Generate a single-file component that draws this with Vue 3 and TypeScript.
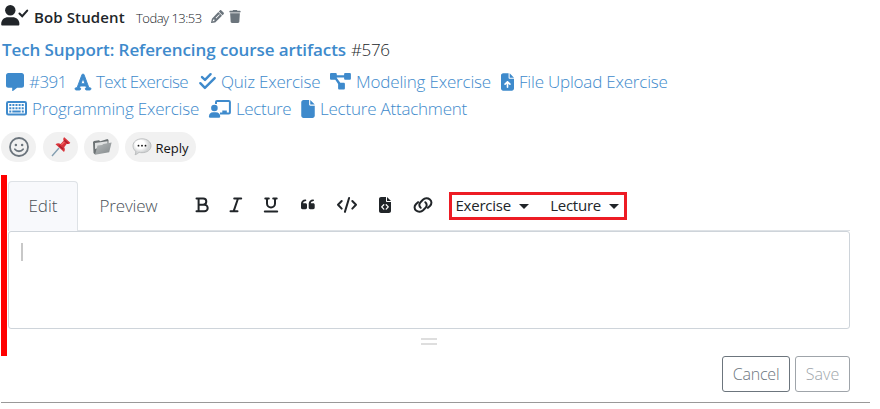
<script setup lang="ts">
import { ref } from 'vue'

interface Reference {
  icon: 'message' | 'font' | 'checks' | 'diagram' | 'upload' | 'keyboard' | 'teacher' | 'file'
  label: string
  iconWidth: number
  width: number
  spacing: number
}

const referenceRows: Reference[][] = [
  [
    { icon: 'message', label: '#391', iconWidth: 18, width: 69, spacing: -0.6 },
    { icon: 'font', label: 'Text Exercise', iconWidth: 16, width: 124, spacing: -0.6 },
    { icon: 'checks', label: 'Quiz Exercise', iconWidth: 17, width: 131, spacing: -0.22 },
    { icon: 'diagram', label: 'Modeling Exercise', iconWidth: 21, width: 171, spacing: -0.18 },
    { icon: 'upload', label: 'File Upload Exercise', iconWidth: 13, width: 170, spacing: -0.2 },
  ],
  [
    { icon: 'keyboard', label: 'Programming Exercise', iconWidth: 21, width: 203, spacing: -0.2 },
    { icon: 'teacher', label: 'Lecture', iconWidth: 22, width: 92, spacing: -0.35 },
    { icon: 'file', label: 'Lecture Attachment', iconWidth: 14, width: 170, spacing: -0.22 },
  ],
]

const activeTab = ref<'edit' | 'preview'>('edit')
</script>

<template>
  <main class="post">
    <header class="author">
      <svg class="user" viewBox="0 0 27 22" width="27" height="22">
        <circle cx="9.3" cy="5.2" r="5.2" />
        <path d="M7.2 12.3h4.2c4 0 7 2.700 7 6.700 0 1-.4 1.600-1.400 1.600H1.600C.6 20.600 .2 20 .2 19c0-4 3-6.700 7-6.700z" />
        <path class="stroke" d="M18.500 8.600l2.700 2.700 5-5.700" />
      </svg>
      <strong class="name">Bob Student</strong>
      <span class="date">Today 13:53</span>
      <svg class="pencil" viewBox="0 0 512 512" width="13" height="13"><path d="M410 18l84 84c22 22 22 42 0 62l-42 42L306 60l42-42c20-22 42-22 62 0zM287 79l146 146-258 258c-8 8-14 11-24 14L24 511c-14 4-27-9-23-23l31-127c3-10 7-16 14-24L287 79zM87 378l-24 74 74-24v-50H87zM182 310l22 22 142-142-22-22z" fill-rule="evenodd" /></svg>
      <svg class="trash" viewBox="0 0 448 512" width="12" height="13"><path d="M135 18L128 32H32C14 32 0 46 0 64s14 32 32 32h384c18 0 32-14 32-32s-14-32-32-32h-96l-7-14C307 7 296 0 284 0H164c-12 0-23 7-29 18zM416 128H32l21 339c2 25 23 45 48 45h246c25 0 46-20 48-45z" /></svg>
    </header>

    <h1 class="title"><a>Tech Support: Referencing course artifacts</a><span>#576</span></h1>

    <section class="references">
      <div v-for="(row, index) in referenceRows" :key="index" class="reference-row">
        <a v-for="item in row" :key="item.label" class="reference" :style="{ width: item.width + 'px' }">
          <svg v-if="item.icon === 'message'" viewBox="0 0 18 18" :width="item.iconWidth" height="18"><path d="M2.300 0h13.400C17 0 18 1 18 2.300v10.200c0 1.300-1 2.300-2.300 2.300h-4.600L7 17.900c-.4.300-.8.100-.8-.4v-2.700H2.300C1 14.800 0 13.800 0 12.500V2.300C0 1 1 0 2.300 0z" /></svg>
          <svg v-else-if="item.icon === 'font'" class="font-icon" viewBox="0 0 448 448" :width="item.iconWidth" height="16"><path d="M254 21c-5-13-17-21-30-21s-25 8-30 21L58 384H32c-18 0-32 14-32 32s14 32 32 32h96c18 0 32-14 32-32s-14-32-32-32h-2l18-48h160l18 48h-2c-18 0-32 14-32 32s14 32 32 32h96c18 0 32-14 32-32s-14-32-32-32h-26zM280 272H168l56-149z" /></svg>
          <svg v-else-if="item.icon === 'checks'" class="line-icon" viewBox="0 0 17 17" :width="item.iconWidth" height="17"><path d="M3 4.100l3 2.800 5.600-5.700M1.300 10.200l4.600 4.700 9.800-9.800" /></svg>
          <svg v-else-if="item.icon === 'diagram'" viewBox="0 0 21 17" :width="item.iconWidth" height="17"><path d="M1.300 0h4.200c.8 0 1.300.5 1.300 1.300v1h7.300v-1C14.100.5 14.600 0 15.400 0h4.200c.8 0 1.300.5 1.300 1.300v4.100c0 .8-.5 1.300-1.300 1.300h-4.200c-.8 0-1.300-.5-1.300-1.300v-1H6.800v.7l3.500 4.700h3.300c.8 0 1.300.5 1.300 1.300v4.200c0 .8-.5 1.300-1.300 1.300H9.400c-.8 0-1.300-.5-1.300-1.300v-4.200L5.300 6.700h-4C.5 6.700 0 6.200 0 5.400V1.300C0 .5.500 0 1.300 0z" /></svg>
          <svg v-else-if="item.icon === 'upload'" viewBox="0 0 384 512" :width="item.iconWidth" height="18"><path d="M64 0C29 0 0 29 0 64v384c0 35 29 64 64 64h256c35 0 64-29 64-64V160H256c-18 0-32-14-32-32V0zM256 0v128h128zM216 408c0 13-11 24-24 24s-24-11-24-24V306l-31 31c-9 9-25 9-34 0s-9-25 0-34l72-72c9-9 25-9 34 0l72 72c9 9 9 25 0 34s-25 9-34 0l-31-31z" /></svg>
          <svg v-else-if="item.icon === 'keyboard'" viewBox="0 0 21 15" :width="item.iconWidth" height="15">
            <rect class="key-frame" x="1" y="1" width="19" height="12.600" rx="1.300" />
            <path class="keys" d="M3.300 4h14.500M3.300 7.300h14.500" />
            <path d="M3.300 9.600h2v2h-2zM6.300 9.600h8.400v2H6.300zM15.800 9.600h2v2h-2z" />
          </svg>
          <svg v-else-if="item.icon === 'teacher'" viewBox="0 0 22 18" :width="item.iconWidth" height="18">
            <circle cx="5.400" cy="8" r="3.300" />
            <path d="M4.100 12.200h2.800c2.600 0 4.300 1.900 4.300 4.300 0 .8-.3 1.200-1.100 1.200H1c-.8 0-1.100-.4-1.100-1.200 0-2.400 1.700-4.300 4.200-4.300z" />
            <path class="board" d="M7 4V2.100c0-.7.400-1.100 1.100-1.100h11.700c.7 0 1.100.4 1.100 1.100v10.300c0 .7-.4 1.100-1.100 1.100H11" />
            <path d="M13.300 10.500h4.500v2.700h-4.500z" />
          </svg>
          <svg v-else viewBox="0 0 384 512" :width="item.iconWidth" height="18"><path d="M0 64C0 29 29 0 64 0h160v128c0 18 14 32 32 32h128v288c0 35-29 64-64 64H64c-35 0-64-29-64-64zm384 64H256V0z" /></svg>
          <span :style="{ letterSpacing: item.spacing + 'px' }">{{ item.label }}</span>
        </a>
      </div>
    </section>

    <section class="reactions">
      <button class="chip emoji">
        <svg viewBox="0 0 20 20" width="20" height="20"><g class="smile"><circle cx="10" cy="10" r="9" /><path d="M5.900 12.300c2 2.600 6.200 2.600 8.200 0" /></g><circle cx="6.900" cy="8" r="1.250" /><circle cx="13.100" cy="8" r="1.250" /></svg>
      </button>
      <button class="chip">
        <svg viewBox="0 0 20 20" width="20" height="20">
          <path d="M1 19L8 11" stroke="#829daf" stroke-width="1.300" />
          <path d="M4.500 7.200c2-1.200 3.700-1 5.100-.2l3-3.200c-.7-1.600-.3-2.900.7-3.500l6 5.500c-.7 1.200-2.200 1.500-3.500 1l-2.600 3.400c.9 1.600.9 3.300-.2 4.700z" fill="#d9343b" />
          <path d="M8 8.600l4 3.400M13.300 3.300l3.700 3.200" stroke="#a91e2b" stroke-width="1.300" />
          <path d="M10.400 7.900l3-3" stroke="#f36a68" stroke-width="1.200" />
        </svg>
      </button>
      <button class="chip">
        <svg viewBox="0 0 20 18" width="20" height="18">
          <defs><linearGradient id="folder-front" x2="1" y2="1"><stop stop-color="#b6babb" /><stop offset="1" stop-color="#83898b" /></linearGradient></defs>
          <path d="M1 4l1-1 5-.7 1.300 1L15.500 1l1 1v4L3 16.500 1.500 15z" fill="#6c7274" />
          <path d="M3 5l12.500-1.800v4L3 11z" fill="#dfe1e1" />
          <path d="M5.500 7.600l4.600-.7 1.100-1L19.600 4.600l-2.400 9.600-14.200 2.600z" fill="url(#folder-front)" />
        </svg>
      </button>
      <button class="chip reply">
        <svg viewBox="0 0 20 18" width="20" height="18">
          <defs><radialGradient id="bubble-shade" cx=".4" cy=".35"><stop offset=".5" stop-color="#fff" /><stop offset="1" stop-color="#d2d4d5" /></radialGradient></defs>
          <path d="M10 .8c5 0 9 2.900 9 7s-4 6.900-9 6.900c-1 0-2-.1-2.900-.4-1 1.100-2.400 2-4 2.500.6-1.100.8-2.400.5-3.600C2 11.900 1 10 1 7.800c0-4.100 4-7 9-7z" fill="url(#bubble-shade)" stroke="#b2b5b6" stroke-width=".8" />
          <circle cx="6.500" cy="7.700" r=".9" /><circle cx="10" cy="7.700" r=".9" /><circle cx="13.500" cy="7.700" r=".9" />
        </svg>
        <span>Reply</span>
      </button>
    </section>

    <section class="composer">
      <div class="toolbar">
        <button class="tab" :class="{ active: activeTab === 'edit' }" @click="activeTab = 'edit'"><span>Edit</span></button>
        <button class="tab preview" :class="{ active: activeTab === 'preview' }" @click="activeTab = 'preview'"><span>Preview</span></button>
        <div class="tools">
          <svg viewBox="1 0 12 16" width="12" height="16"><path d="M1.500 1.500h6.700a3 3 0 010 6.200H3.600M1.500 14.300h7.900a3.300 3.300 0 000-6.600H3.600M3.600 1.500v12.800" /></svg>
          <svg viewBox="1 0 12 16" width="12" height="16"><path d="M5.200 1.500h7M1.500 14.300h7M9 1.500L4.600 14.300" /></svg>
          <svg viewBox="1 0 14 16" width="14" height="16"><path d="M2.300 1.400h3.500M10.200 1.400h3.500M4 1.400v5a4 4 0 008 0v-5M1.800 14.500h12.400" /></svg>
          <svg class="solid" viewBox="-1 0 15 12" width="15" height="12"><path d="M0 4.500C0 2.100 1.900 .5 4.300.4c.6 0 1 .4 1 .9s-.4.900-1 .9C3 2.300 2.200 3 2.100 4.200h2.400c.9 0 1.500.6 1.500 1.500v2.900c0 .9-.6 1.600-1.500 1.600h-3C.6 10.200 0 9.500 0 8.600zM7.700 4.500C7.700 2.100 9.600.5 12 .4c.6 0 1 .4 1 .9s-.4.900-1 .9c-1.300.1-2.100.8-2.200 2h2.400c.9 0 1.500.6 1.500 1.500v2.900c0 .9-.6 1.600-1.500 1.600h-3c-.9 0-1.500-.7-1.500-1.600z" /></svg>
          <svg viewBox="0 0 20 16" width="20" height="16"><path d="M4.700 4L1 7.800l3.700 3.800M15.300 4L19 7.800l-3.700 3.800M12.100 1L7.900 14.900" /></svg>
          <svg class="solid" viewBox="0 0 12 16" width="12" height="16"><path d="M2 0h5v4c0 .6.400 1 1 1h4v9c0 1.100-.9 2-2 2H2c-1.100 0-2-.9-2-2V2C0 .9.900 0 2 0zM8 0l4 4H8z" /><path class="file-code" d="M4.800 7.700L2.700 9.900l2.100 2.200M7.200 7.700l2.100 2.200-2.100 2.200" /></svg>
          <svg viewBox="0 0 20 16" width="20" height="16"><path d="M7.700 10.800c-1.800-1.500-1.800-3.900-.2-5.600l2.400-2.400c1.900-1.800 4.900-2 7-.3 2 1.800 2 4.300.2 6.200l-2.200 2.200M12.300 5.200c1.800 1.500 1.800 3.900.2 5.600l-2.400 2.400c-1.900 1.800-4.900 2-7 .3-2-1.800-2-4.300-.2-6.200l2.200-2.200" /></svg>
        </div>
        <div class="menus">
          <button><span>Exercise</span><i class="caret"></i></button>
          <button><span>Lecture</span><i class="caret"></i></button>
        </div>
      </div>
      <div class="editor"><i class="cursor"></i></div>
      <div class="handle"></div>
    </section>

    <footer class="actions">
      <button class="cancel">Cancel</button>
      <button class="save" disabled>Save</button>
    </footer>
  </main>
</template>

<style>
body { margin: 0; background: #fff; }
</style>

<style scoped>
* { box-sizing: border-box; }
.post {
  width: 870px;
  height: 403px;
  padding-left: 1px;
  font-family: "Open Sans", "Noto Sans", sans-serif;
  font-weight: 300;
  font-size: 16px;
  color: #212529;
}
svg { display: block; flex: none; fill: currentColor; overflow: visible; }
button { border: 0; margin: 0; padding: 0; background: none; color: inherit; font: inherit; }
span, strong, a { white-space: nowrap; }
.author { display: flex; height: 34px; align-items: center; }
.user { margin-top: -3px; }
.user .stroke { fill: none; stroke: currentColor; stroke-width: 2.100; stroke-linecap: round; }
.name { width: 102px; margin-left: 6px; font-size: 15px; font-weight: 600; letter-spacing: .12px; }
.date { width: 75px; padding-top: 1px; font-size: 13px; letter-spacing: -.5px; }
.pencil, .trash { color: #6c757d; margin-top: -2px; }
.trash { margin-left: 5px; }
.title { display: flex; height: 34px; margin: 0; align-items: center; font-size: 17px; font-weight: 300; line-height: 32px; padding: 0 0 3px 1px; }
.title a { width: 349px; font-weight: 600; letter-spacing: -.09px; color: #3e8acc; }
.title span { letter-spacing: -.4px; }
.references { height: 64px; padding: 0 0 0 5px; color: #3e8acc; }
.reference-row { display: flex; height: 27px; align-items: center; }
.reference { display: flex; align-items: center; gap: 5px; font-size: 17px; line-height: 27px; }
.font-icon { stroke: currentColor; stroke-width: 26; }
.line-icon { fill: none; stroke: currentColor; stroke-width: 2.400; stroke-linecap: round; stroke-linejoin: round; }
.key-frame, .board { fill: none; stroke: currentColor; stroke-width: 2; }
.keys { fill: none; stroke: currentColor; stroke-width: 2; stroke-dasharray: 2 1.100; }
.reactions { display: flex; height: 43px; gap: 6px; }
.chip { display: flex; width: 35px; height: 30px; border-radius: 15px; align-items: center; justify-content: center; background: #f1f1f1; color: #6c757d; }
.emoji { margin-right: 1px; }
.smile { fill: none; stroke: currentColor; stroke-width: 1.800; stroke-linecap: round; }
.reply { width: 71px; gap: 3px; color: #111; font-size: 13px; font-weight: 400; }
.reply span { padding-top: 2px; }
.composer { height: 181px; padding: 6px 19px 0 1px; border-left: 6px solid red; }
.toolbar { display: flex; width: 842px; height: 50px; border-bottom: 1px solid #dee2e6; }
.tab { width: 70px; height: 50px; padding-bottom: 2px; color: #495057; font-size: 17px; border: 1px solid transparent; border-bottom: 0; }
.tab.active { background: #f8f9fc; border-color: #dee2e6; border-radius: 4px 4px 0 0; }
.preview { width: 101px; letter-spacing: -.2px; }
.tools { display: flex; width: 254px; gap: 22px; padding: 0 0 1px 17px; align-items: center; }
.tools svg { fill: none; stroke: currentColor; stroke-width: 2; stroke-linecap: round; stroke-linejoin: round; }
.tools .solid { fill: currentColor; stroke: none; }
.solid .file-code { fill: none; stroke: #fff; stroke-width: 1.300; }
.menus { display: flex; width: 178px; height: 28px; margin: 11px 0 0 16px; padding: 0 5px 0 3.500px; border: 3px solid #ed1c24; justify-content: space-between; }
.menus button { display: flex; align-items: center; gap: 8px; padding-bottom: 2px; font-size: 15px; font-weight: 400; letter-spacing: -.24px; }
.caret { width: 0; margin-top: 2px; border: 5px solid transparent; border-top: 5px solid #212529; border-bottom: 0; }
.editor { width: 842px; height: 98px; padding: 11px 12px; border: 1px solid #ced4da; border-radius: 3px; }
.cursor { display: block; width: 2px; height: 18px; background: #c8c8c8; }
.handle { width: 16px; height: 7px; margin: 9px 0 0 413px; border: solid #dedede; border-width: 2px 0; }
.actions { display: flex; height: 47px; justify-content: flex-end; gap: 5px; padding-right: 20px; border-bottom: 1px solid #999; }
.actions button { height: 36px; border: 1px solid #6c757d; border-radius: 3px; font-size: 16px; color: #6c757d; }
.actions .cancel { width: 68px; letter-spacing: -.2px; }
.actions .save { width: 55px; opacity: .65; }
</style>
